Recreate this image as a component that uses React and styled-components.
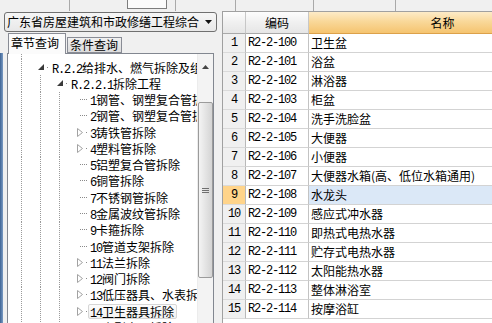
import React from 'react';
import styled, { createGlobalStyle } from 'styled-components';

const Global = createGlobalStyle`
  html, body { margin: 0; padding: 0; background: #f0f0f0; }
  body {
    font-family: "Noto Sans CJK SC", "Liberation Sans", sans-serif;
    font-size: 12px;
    color: #000;
  }
`;

const Frame = styled.div`
  width: 492px;
  height: 323px;
  overflow: hidden;
  display: flex;
  flex-direction: column;
  background: #f0f0f0;
`;

/* ---------- top toolbar strip (cut off) ---------- */
const TopStrip = styled.div`
  flex: none;
  height: 11px;
  display: flex;
  background: #f0f0f0;
`;
const StripCell = styled.div`
  flex: none;
  box-sizing: border-box;
  width: ${p => p.$w}px;
  height: 11px;
  border-right: ${p => (p.$line ? '1px solid #a9a9a9' : 'none')};
`;
const StripBox = styled.div`
  flex: none;
  box-sizing: border-box;
  width: 40px;
  height: 9px;
  background: #fbfbfb;
  border: 1px solid #7d7d7d;
  border-top: none;
`;

/* ---------- main ---------- */
const Main = styled.div`
  flex: 1;
  min-height: 0;
  display: flex;
`;

const LeftPanel = styled.div`
  flex: none;
  width: 222px;
  display: flex;
  flex-direction: column;
  padding-top: 1px;
  box-sizing: border-box;
`;

const Dropdown = styled.div`
  flex: none;
  box-sizing: border-box;
  margin-left: 4px;
  width: 213px;
  height: 20px;
  border: 1px solid #707070;
  border-radius: 3px;
  background: linear-gradient(#f6f6f6, #e8e8e8);
  display: flex;
  align-items: center;
  padding-left: 2px;
  white-space: nowrap;
  overflow: hidden;
`;
const DropText = styled.span`
  flex: 1;
  line-height: 18px;
  overflow: hidden;
`;
const DropArrow = styled.svg`
  flex: none;
  width: 7px;
  height: 4px;
  margin: 0 4px 0 2px;
`;

const TabsRow = styled.div`
  flex: none;
  display: flex;
  align-items: flex-end;
  margin-top: 1px;
  padding-left: 8px;
  height: 20px;
`;
const Tab = styled.div`
  flex: none;
  box-sizing: border-box;
  width: ${p => (p.$active ? 58 : 55)}px;
  height: ${p => (p.$active ? 21 : 16)}px;
  margin-left: ${p => (p.$active ? 0 : 1)}px;
  margin-bottom: ${p => (p.$active ? -1 : 0)}px;
  position: relative;
  z-index: ${p => (p.$active ? 1 : 0)};
  border: 1px solid #898c95;
  border-bottom: ${p => (p.$active ? 'none' : '1px solid #898c95')};
  background: ${p => (p.$active ? '#fbfbfb' : 'linear-gradient(#f0f0f0, #dcdcdc)')};
  padding-left: ${p => (p.$active ? 2 : 2)}px;
  line-height: ${p => (p.$active ? 18 : 14)}px;
  white-space: nowrap;
`;

const BodyRow = styled.div`
  flex: none;
  height: 290px;
  display: flex;
`;
const Edge = styled.div`
  flex: none;
  width: 3px;
  margin-right: 4px;
  background: linear-gradient(to right, #3f6494, #7a9bc4);
`;
const TreeBox = styled.div`
  flex: none;
  box-sizing: border-box;
  width: 207px;
  border: 1px solid #828790;
  background: #fff;
  display: flex;
  overflow: hidden;
`;
const TreeList = styled.div`
  flex: 1;
  min-width: 0;
  overflow: hidden;
`;
const TopGap = styled.div`
  height: 5px;
  display: flex;
`;
const TreeRow = styled.div`
  display: flex;
  align-items: center;
  height: 16.27px;
  white-space: nowrap;
`;
const Guide = styled.span`
  flex: none;
  width: 19px;
  align-self: stretch;
  background: repeating-linear-gradient(to bottom, #9a9a9a 0 1px, transparent 1px 2px) 13px 0 / 1px 100% no-repeat;
`;
const Toggle = styled.span`
  flex: none;
  width: 23px;
  height: 100%;
  display: flex;
  align-items: center;
`;
const Connector = styled.span`
  flex: none;
  margin-left: 15px;
  width: 8px;
  height: 1px;
  background: repeating-linear-gradient(to right, #8a8a8a 0 1px, transparent 1px 2px);
`;
const Dot = styled.span`
  flex: none;
  margin-left: ${p => p.$ml}px;
  width: 1px;
  height: 1px;
  background: #8a8a8a;
`;
const Arrow = styled.svg`
  flex: none;
  margin-left: ${p => p.$ml}px;
  display: block;
`;
const Label = styled.span`
  flex: none;
  box-sizing: border-box;
  height: 15px;
  line-height: 13px;
  padding: 0 2px 0 1px;
  border: 1px solid ${p => (p.$sel ? '#d6d6d6' : 'transparent')};
  border-radius: 2px;
  background: ${p => (p.$sel ? 'linear-gradient(#fcfcfc, #f1f1f1)' : 'transparent')};
`;
const Num = styled.span`
  font-family: "Liberation Mono", monospace;
  font-size: 12px;
  letter-spacing: -1.2px;
`;

const Scrollbar = styled.div`
  flex: none;
  width: 16px;
  background: #f3f3f3;
  border-left: 1px solid #ececec;
  box-sizing: border-box;
  display: flex;
  flex-direction: column;
  align-items: center;
`;
const ScrollBtn = styled.div`
  flex: none;
  height: 26px;
  width: 100%;
  display: flex;
  align-items: center;
  justify-content: center;
`;
const Thumb = styled.div`
  flex: none;
  box-sizing: border-box;
  margin-top: 22px;
  width: 15px;
  height: 176px;
  border: 1px solid #9b9b9b;
  border-radius: 2px;
  background: linear-gradient(to right, #f4f4f4, #e4e4e4 50%, #d4d4d4);
  display: flex;
  align-items: center;
  justify-content: center;
`;
const Grip = styled.div`
  width: 7px;
  height: 5px;
  background: repeating-linear-gradient(to bottom, #6f6f6f 0 1px, transparent 1px 2px);
`;

/* ---------- table ---------- */
const TableArea = styled.div`
  flex: 1;
  min-width: 0;
  border-left: 1px solid #a0a0a0;
  border-top: 1px solid #a0a0a0;
  background: #fff;
  overflow: hidden;
`;
const Grid = styled.div`
  display: grid;
  grid-template-columns: 23px 63px 268px;
  grid-auto-rows: 19px;
  grid-template-rows: 22px;
`;
const HeadCell = styled.div`
  box-sizing: border-box;
  border-right: 1px solid ${p => (p.$hot ? '#e3b262' : '#c7c7c7')};
  border-bottom: 1px solid ${p => (p.$hot ? '#dca14a' : '#a9a9a9')};
  background: ${p =>
    p.$hot
      ? 'linear-gradient(#fdebc8, #f9d899 45%, #f5c470)'
      : 'linear-gradient(#fdfdfd, #f0f0f0 50%, #e6e6e6)'};
  text-align: center;
  line-height: 21px;
  white-space: nowrap;
`;
const NumCell = styled.div`
  box-sizing: border-box;
  border-right: 1px solid #b9b9b9;
  border-bottom: 1px solid #dadada;
  background: ${p => (p.$sel ? '#ffd48a' : '#f0f0f0')};
  text-align: center;
  line-height: 18px;
  font-family: "Liberation Mono", monospace;
  font-size: 12px;
  letter-spacing: -1.2px;
`;
const CodeCell = styled.div`
  box-sizing: border-box;
  border-right: 1px solid #c3c3c3;
  border-bottom: 1px solid #d3d3d3;
  padding-left: 2px;
  line-height: 18px;
  font-family: "Liberation Mono", monospace;
  font-size: 12px;
  letter-spacing: -1.2px;
  white-space: nowrap;
`;
const NameCell = styled.div`
  box-sizing: border-box;
  border-right: 1px solid #c3c3c3;
  border-bottom: 1px solid #d3d3d3;
  background: ${p => (p.$sel ? '#dbe8f7' : '#fff')};
  padding-left: 2px;
  line-height: 18px;
  white-space: nowrap;
`;

const treeItems = [
  { lv: 1, kind: 'open', num: 'R.2.2', text: '给排水、燃气拆除及组成' },
  { lv: 2, kind: 'open', num: 'R.2.2.1', text: '拆除工程' },
  { lv: 3, kind: 'leaf', num: '1', text: '钢管、钢塑复合管拆除' },
  { lv: 3, kind: 'leaf', num: '2', text: '钢管、钢塑复合管拆除' },
  { lv: 3, kind: 'closed', num: '3', text: '铸铁管拆除' },
  { lv: 3, kind: 'closed', num: '4', text: '塑料管拆除' },
  { lv: 3, kind: 'leaf', num: '5', text: '铝塑复合管拆除' },
  { lv: 3, kind: 'leaf', num: '6', text: '铜管拆除' },
  { lv: 3, kind: 'leaf', num: '7', text: '不锈钢管拆除' },
  { lv: 3, kind: 'leaf', num: '8', text: '金属波纹管拆除' },
  { lv: 3, kind: 'leaf', num: '9', text: '卡箍拆除' },
  { lv: 3, kind: 'leaf', num: '10', text: '管道支架拆除' },
  { lv: 3, kind: 'closed', num: '11', text: '法兰拆除' },
  { lv: 3, kind: 'closed', num: '12', text: '阀门拆除' },
  { lv: 3, kind: 'closed', num: '13', text: '低压器具、水表拆除' },
  { lv: 3, kind: 'closed', num: '14', text: '卫生器具拆除', sel: true },
  { lv: 3, kind: 'closed', num: '15', text: '小型容器拆除' },
];

const rows = [
  ['R2-2-100', '卫生盆'],
  ['R2-2-101', '浴盆'],
  ['R2-2-102', '淋浴器'],
  ['R2-2-103', '柜盆'],
  ['R2-2-104', '洗手洗脸盆'],
  ['R2-2-105', '大便器'],
  ['R2-2-106', '小便器'],
  ['R2-2-107', '大便器水箱(高、低位水箱通用)'],
  ['R2-2-108', '水龙头'],
  ['R2-2-109', '感应式冲水器'],
  ['R2-2-110', '即热式电热水器'],
  ['R2-2-111', '贮存式电热水器'],
  ['R2-2-112', '太阳能热水器'],
  ['R2-2-113', '整体淋浴室'],
  ['R2-2-114', '按摩浴缸'],
];

function ToggleMark({ kind }) {
  if (kind === 'leaf') {
    return (
      <Toggle>
        <Connector />
      </Toggle>
    );
  }
  if (kind === 'open') {
    return (
      <Toggle>
        <Arrow $ml={11} width="6" height="6" viewBox="0 0 6 6">
          <polygon points="6,0 6,6 0,6" fill="#3a3a3a" />
        </Arrow>
        <Dot $ml={3} />
      </Toggle>
    );
  }
  return (
    <Toggle>
      <Arrow $ml={12} width="6" height="9" viewBox="0 0 6 9">
        <polygon points="0.5,0.5 5.5,4.5 0.5,8.5" fill="#fff" stroke="#a2a2a2" strokeWidth="1" />
      </Arrow>
      <Dot $ml={3} />
    </Toggle>
  );
}

export default function App() {
  return (
    <>
      <Global />
      <Frame>
        <TopStrip>
          <StripCell $w={70} $line />
          <StripCell $w={57} />
          <StripBox />
          <StripCell $w={9} $line />
          <StripCell $w={60} $line />
          <StripCell $w={78} $line />
          <StripCell $w={82} $line />
        </TopStrip>
        <Main>
          <LeftPanel>
            <Dropdown>
              <DropText>广东省房屋建筑和市政修缮工程综合</DropText>
              <DropArrow viewBox="0 0 7 4">
                <polygon points="0,0 7,0 3.5,4" fill="#111" />
              </DropArrow>
            </Dropdown>
            <TabsRow>
              <Tab $active>章节查询</Tab>
              <Tab>条件查询</Tab>
            </TabsRow>
            <BodyRow>
              <Edge />
              <TreeBox>
                <TreeList>
                  <TopGap>
                    <Guide />
                  </TopGap>
                  {treeItems.map((it, i) => (
                    <TreeRow key={i}>
                      {Array.from({ length: it.lv }).map((_, g) => (
                        <Guide key={g} />
                      ))}
                      <ToggleMark kind={it.kind} />
                      <Label $sel={it.sel}>
                        <Num>{it.num}</Num>
                        {it.text}
                      </Label>
                    </TreeRow>
                  ))}
                </TreeList>
                <Scrollbar>
                  <ScrollBtn>
                    <svg width="7" height="4" viewBox="0 0 7 4">
                      <polygon points="0,4 7,4 3.5,0" fill="#444" />
                    </svg>
                  </ScrollBtn>
                  <Thumb>
                    <Grip />
                  </Thumb>
                </Scrollbar>
              </TreeBox>
            </BodyRow>
          </LeftPanel>
          <TableArea>
            <Grid>
              <HeadCell />
              <HeadCell>编码</HeadCell>
              <HeadCell $hot>名称</HeadCell>
              {rows.map(([code, name], i) => (
                <React.Fragment key={code}>
                  <NumCell $sel={i === 8}>{i + 1}</NumCell>
                  <CodeCell>{code}</CodeCell>
                  <NameCell $sel={i === 8}>{name}</NameCell>
                </React.Fragment>
              ))}
            </Grid>
          </TableArea>
        </Main>
      </Frame>
    </>
  );
}
